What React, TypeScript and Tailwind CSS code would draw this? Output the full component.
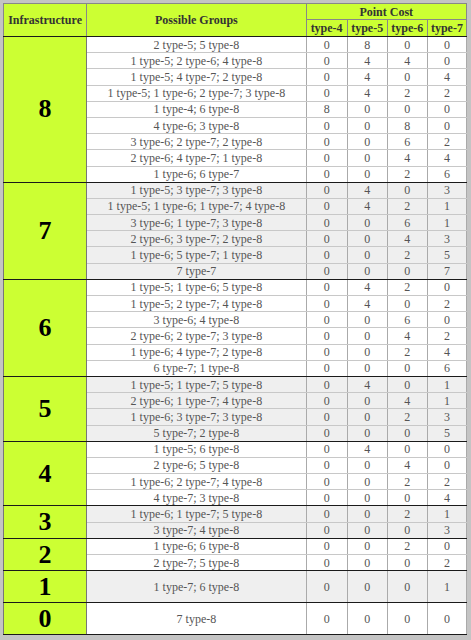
import React from 'react';

type Row = { g: string; c: number[] };
type Group = { n: number; shade: boolean; tall?: boolean; rows: Row[] };

const groups: Group[] = [
	{
		n: 8,
		shade: false,
		rows: [
			{ g: '2 type-5; 5 type-8', c: [0, 8, 0, 0] },
			{ g: '1 type-5; 2 type-6; 4 type-8', c: [0, 4, 4, 0] },
			{ g: '1 type-5; 4 type-7; 2 type-8', c: [0, 4, 0, 4] },
			{ g: '1 type-5; 1 type-6; 2 type-7; 3 type-8', c: [0, 4, 2, 2] },
			{ g: '1 type-4; 6 type-8', c: [8, 0, 0, 0] },
			{ g: '4 type-6; 3 type-8', c: [0, 0, 8, 0] },
			{ g: '3 type-6; 2 type-7; 2 type-8', c: [0, 0, 6, 2] },
			{ g: '2 type-6; 4 type-7; 1 type-8', c: [0, 0, 4, 4] },
			{ g: '1 type-6; 6 type-7', c: [0, 0, 2, 6] },
		],
	},
	{
		n: 7,
		shade: true,
		rows: [
			{ g: '1 type-5; 3 type-7; 3 type-8', c: [0, 4, 0, 3] },
			{ g: '1 type-5; 1 type-6; 1 type-7; 4 type-8', c: [0, 4, 2, 1] },
			{ g: '3 type-6; 1 type-7; 3 type-8', c: [0, 0, 6, 1] },
			{ g: '2 type-6; 3 type-7; 2 type-8', c: [0, 0, 4, 3] },
			{ g: '1 type-6; 5 type-7; 1 type-8', c: [0, 0, 2, 5] },
			{ g: '7 type-7', c: [0, 0, 0, 7] },
		],
	},
	{
		n: 6,
		shade: false,
		rows: [
			{ g: '1 type-5; 1 type-6; 5 type-8', c: [0, 4, 2, 0] },
			{ g: '1 type-5; 2 type-7; 4 type-8', c: [0, 4, 0, 2] },
			{ g: '3 type-6; 4 type-8', c: [0, 0, 6, 0] },
			{ g: '2 type-6; 2 type-7; 3 type-8', c: [0, 0, 4, 2] },
			{ g: '1 type-6; 4 type-7; 2 type-8', c: [0, 0, 2, 4] },
			{ g: '6 type-7; 1 type-8', c: [0, 0, 0, 6] },
		],
	},
	{
		n: 5,
		shade: true,
		rows: [
			{ g: '1 type-5; 1 type-7; 5 type-8', c: [0, 4, 0, 1] },
			{ g: '2 type-6; 1 type-7; 4 type-8', c: [0, 0, 4, 1] },
			{ g: '1 type-6; 3 type-7; 3 type-8', c: [0, 0, 2, 3] },
			{ g: '5 type-7; 2 type-8', c: [0, 0, 0, 5] },
		],
	},
	{
		n: 4,
		shade: false,
		rows: [
			{ g: '1 type-5; 6 type-8', c: [0, 4, 0, 0] },
			{ g: '2 type-6; 5 type-8', c: [0, 0, 4, 0] },
			{ g: '1 type-6; 2 type-7; 4 type-8', c: [0, 0, 2, 2] },
			{ g: '4 type-7; 3 type-8', c: [0, 0, 0, 4] },
		],
	},
	{
		n: 3,
		shade: true,
		rows: [
			{ g: '1 type-6; 1 type-7; 5 type-8', c: [0, 0, 2, 1] },
			{ g: '3 type-7; 4 type-8', c: [0, 0, 0, 3] },
		],
	},
	{
		n: 2,
		shade: false,
		rows: [
			{ g: '1 type-6; 6 type-8', c: [0, 0, 2, 0] },
			{ g: '2 type-7; 5 type-8', c: [0, 0, 0, 2] },
		],
	},
	{ n: 1, shade: true, tall: true, rows: [{ g: '1 type-7; 6 type-8', c: [0, 0, 0, 1] }] },
	{ n: 0, shade: false, tall: true, rows: [{ g: '7 type-8', c: [0, 0, 0, 0] }] },
];

export default function App() {
	return (
		<div
			className="w-[471px] h-[640px] bg-[#c4c4c4] pt-[3px] pl-[3px]"
			style={{ fontFamily: '"Liberation Serif", "Times New Roman", serif' }}
		>
			<table className="table-fixed border-collapse w-[464px] border border-[#1a1a1a] text-[12px] leading-none">
				<colgroup>
					<col className="w-[83px]" />
					<col className="w-[219px]" />
					<col className="w-[41px]" />
					<col className="w-[40px]" />
					<col className="w-[40px]" />
					<col className="w-[39px]" />
				</colgroup>
				<thead className="bg-[#ccff33] text-[#333] font-bold">
					<tr className="h-[16px]">
						<th rowSpan={2} className="border border-[#888] border-b-[#1a1a1a] font-bold">Infrastructure</th>
						<th rowSpan={2} className="border border-[#888] border-b-[#1a1a1a] font-bold">Possible Groups</th>
						<th colSpan={4} className="border border-[#888] font-bold">Point Cost</th>
					</tr>
					<tr className="h-[17px]">
						{['type-4', 'type-5', 'type-6', 'type-7'].map(t => (
							<th key={t} className="border border-[#888] border-b-[#1a1a1a] font-bold">{t}</th>
						))}
					</tr>
				</thead>
				<tbody className="text-[#555]">
					{groups.map(grp =>
						grp.rows.map((r, i) => {
							const last = i === grp.rows.length - 1;
							const bg = grp.shade ? 'bg-[#efefef]' : 'bg-white';
							const bb = last ? 'border-b-[#1a1a1a]' : 'border-b-[#c8c8c8]';
							return (
								<tr key={`${grp.n}-${i}`} className={grp.tall ? 'h-[32px]' : 'h-[16.2px]'}>
									{i === 0 && (
										<td
											rowSpan={grp.rows.length}
											className="bg-[#ccff33] border border-[#777] border-b-[#1a1a1a] border-t-[#1a1a1a] text-center text-[26px] font-bold text-black"
										>
											{grp.n}
										</td>
									)}
									<td className={`${bg} border-x border-x-[#aaa] border-b ${bb} text-center p-0`}>{r.g}</td>
									{r.c.map((v, k) => (
										<td key={k} className={`${bg} border-x border-x-[#aaa] border-b ${bb} text-center p-0`}>
											{v}
										</td>
									))}
								</tr>
							);
						})
					)}
				</tbody>
			</table>
		</div>
	);
}
